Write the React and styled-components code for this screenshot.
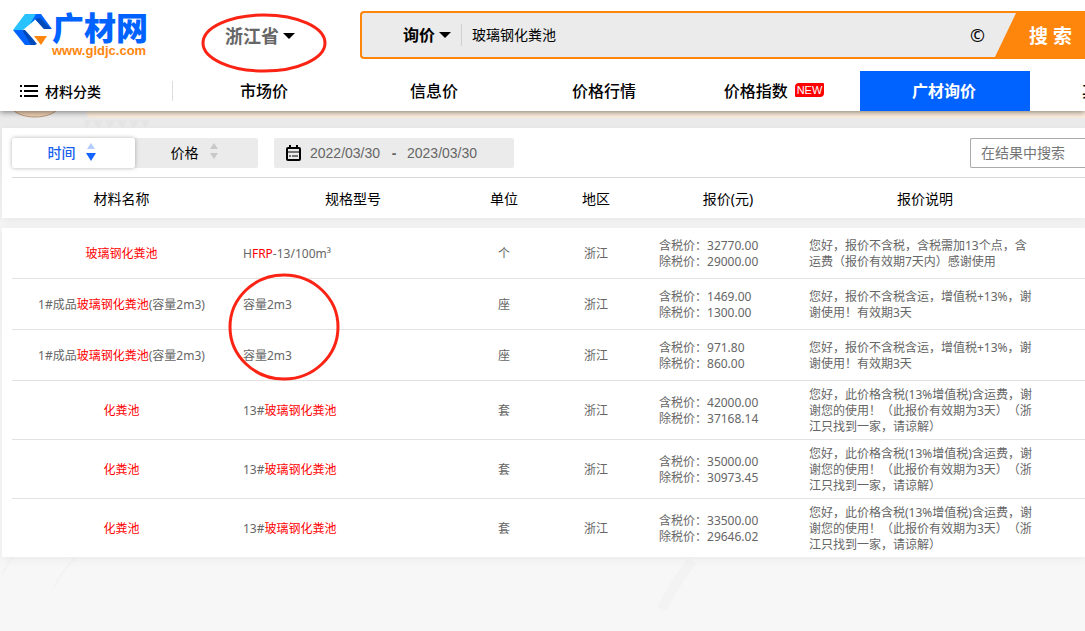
import React, {useState} from 'react';
import styled, {createGlobalStyle, css} from 'styled-components';

const GlobalStyle = createGlobalStyle`
    * {
        box-sizing: border-box;
    }

    body {
        margin: 0;
        overflow: hidden;
        min-height: 100vh;
        background: linear-gradient(#ebebeb 128px, #f5f5f5 228px, #f7f7f7 480px);
        color: #000;
        font-family: "Noto Sans", "Noto Sans CJK SC", sans-serif;
        font-size: 12px;
        text-spacing-trim: space-all;
    }

    button, input {
        margin: 0;
        padding: 0;
        border: 0;
        background: none;
        color: inherit;
        font-family: inherit;
    }
`;

const Header = styled.header`
    position: relative;
    background: #fff;
    box-shadow: 0 1px 6px rgba(0, 0, 0, 0.5);
`;

const TopRow = styled.div`
    display: flex;
    align-items: flex-start;
    height: 71px;
    padding: 11px 0 0 12px;
`;

const Logo = styled.a`
    display: flex;
    width: 213px;
    color: #0062ff;
    text-decoration: none;
`;

const LogoMark = styled.svg`
    flex: none;
    width: 40px;
    height: 36px;
`;

const LogoText = styled.span`
    display: flex;
    flex-direction: column;
    padding-top: 2px;
    white-space: nowrap;
`;

const LogoName = styled.strong`
    font-size: 32px;
    font-weight: 900;
    line-height: 30px;
`;

const LogoUrl = styled.span`
    color: #ff860d;
    font-family: "Liberation Sans", sans-serif;
    font-size: 13px;
    font-weight: bold;
    line-height: 16px;
`;

const Region = styled.div`
    position: relative;
    width: 135px;
    padding-top: 12px;
`;

const Picker = styled.button`
    display: flex;
    align-items: center;
    gap: 4px;
    color: ${props => props.$color || '#000'};
    font-size: ${props => props.$size || 16}px;
    font-weight: bold;
    line-height: 26px;
    white-space: nowrap;

    &::after {
        content: "";
        border: 6px solid transparent;
        border-top-color: #000;
        border-bottom: 0;
    }
`;

const Mark = styled.svg`
    position: absolute;
    top: ${props => props.$top}px;
    left: ${props => props.$left}px;
    pointer-events: none;
`;

const SearchForm = styled.form`
    display: flex;
    flex: 1;
    align-items: center;
    height: 48px;
    padding-left: 41px;
    border: 2px solid #ff860d;
    border-right: 0;
    border-radius: 4px 0 0 4px;
    background: #ebebeb;
`;

const SearchInput = styled.input`
    flex: 1;
    min-width: 0;
    height: 22px;
    margin-left: 10px;
    padding: 0 0 2px 10px;
    border-left: 1px solid #d0d0d0;
    font-size: 14px;
    outline: none;
`;

const ImageSearch = styled.button`
    font-family: "Noto Sans", sans-serif;
    font-size: 18px;
    line-height: 24px;
`;

const SearchButton = styled.button`
    width: 91px;
    height: 48px;
    margin-left: 9px;
    padding: 0 14px 0 35px;
    background: #ff860d;
    clip-path: polygon(23px 0, 100% 0, 100% 100%, 0 100%);
    color: #fff;
    font-size: 19px;
    font-weight: bold;
    text-align: left;
    white-space: nowrap;
`;

const Nav = styled.nav`
    display: flex;
    height: 40px;
    overflow: hidden;
`;

const Category = styled.button`
    display: flex;
    flex: none;
    align-items: center;
    gap: 7px;
    width: 173px;
    height: 20px;
    margin: 10px 7px 0 0;
    padding-left: 20px;
    border-right: 1px solid #ddd;
    font-size: 14px;
    font-weight: 500;
`;

const NavLink = styled.a`
    display: flex;
    flex: none;
    align-items: center;
    justify-content: center;
    gap: 7px;
    width: 170px;
    padding: 0 2px 2px 0;
    background: ${props => props.$active ? '#0062ff' : 'transparent'};
    color: ${props => props.$active ? '#fff' : '#000'};
    font-size: 16px;
    font-weight: ${props => props.$active ? 'bold' : 500};
    text-decoration: none;
`;

const Badge = styled.span`
    padding: 0 2px;
    border-radius: 4px 1px 4px 1px;
    background: #f00;
    color: #fff;
    font-family: "Liberation Sans", sans-serif;
    font-size: 11px;
    font-weight: normal;
    line-height: 14px;
`;

const Banner = styled.svg`
    display: block;
    width: 100%;
    height: 17px;
`;

const Main = styled.main`
    display: grid;
    gap: 10px;
    padding-left: 2px;
`;

const Card = styled.section`
    position: relative;
    padding-left: 10px;
    background: #fff;
    box-shadow: 0 2px 10px rgba(0, 0, 0, 0.06);
`;

const Toolbar = styled.div`
    display: flex;
    align-items: center;
    height: 50px;
    border-bottom: 1px solid #d8d8d8;
`;

const SortGroup = styled.div`
    display: flex;
    margin-right: 16px;
    border-radius: 2px;
    background: #ebebeb;
`;

const SortButton = styled.button`
    display: flex;
    align-items: center;
    justify-content: center;
    gap: 10px;
    width: 123px;
    height: 30px;
    padding: 0 4px 2px 0;
    border-radius: 2px;
    font-size: 14px;

    ${props => props.$active && css`
        background: #fff;
        box-shadow: 0 0 4px rgba(0, 0, 0, 0.3);
        color: #1a5fee;
        font-weight: 500;
    `}
`;

const DateRange = styled.div`
    display: flex;
    align-items: center;
    width: 240px;
    height: 30px;
    padding-left: 12px;
    border-radius: 2px;
    background: #ebebeb;
    color: #666;
    font-family: "Liberation Sans", sans-serif;
    font-size: 14px;
`;

const DateInput = styled.input`
    width: 71px;
    font-size: 14px;
    outline: none;
`;

const DateIcon = styled.svg`
    margin-right: 9px;
`;

const Dash = styled.span`
    width: 26px;
    font-weight: bold;
    text-align: center;
`;

const FilterInput = styled.input`
    width: 115px;
    height: 30px;
    margin-left: auto;
    padding-left: 10px;
    border: 1px solid #aaa;
    border-right: 0;
    border-radius: 2px 0 0 2px;
    font-size: 14px;

    &::placeholder {
        color: #757575;
    }
`;

const Table = styled.table`
    width: 100%;
    border-spacing: 0;
    table-layout: fixed;
`;

const HeadCell = styled.th`
    height: 40px;
    padding: 2px 0 0;
    font-size: 14px;
    font-weight: normal;
    line-height: 20px;
`;

const Cell = styled.td`
    height: 51px;
    padding: 6px 0 4px;
    border-bottom: 1px solid #e2e2e2;
    color: #666;
    line-height: 16px;
    text-align: center;

    tr:last-child > & {
        border-bottom: 0;
    }
`;

const SpecCell = styled(Cell)`
    padding-left: 12px;
    text-align: left;
`;

const PriceCell = styled(Cell)`
    text-align: left;
`;

const NoteCell = styled(Cell)`
    padding-right: 16px;
    padding-left: 12px;
    text-align: left;
`;

const Hit = styled.em`
    color: #f00;
    font-style: normal;
`;

const Streaks = styled.svg`
    display: block;
    width: 100%;
    height: 74px;
`;

const columns = [
    {title: '材料名称', width: 219},
    {title: '规格型号', width: 244},
    {title: '单位', width: 58},
    {title: '地区', width: 126},
    {title: '报价(元)', width: 138},
    {title: '报价说明', width: 256},
    {title: ''},
];

const tank = <Hit>玻璃钢化粪池</Hit>;
const longNote = '您好，此价格含税(13%增值税)含运费，谢谢您的使用！（此报价有效期为3天）（浙江只找到一家，请谅解）';
const shortNote = '您好，报价不含税含运，增值税+13%，谢谢使用！有效期3天';

const rows = [
    {name: tank, spec: <>H<Hit>FRP</Hit>-13/100m³</>, unit: '个', taxed: '32770.00', net: '29000.00',
        note: '您好，报价不含税，含税需加13个点，含运费（报价有效期7天内）感谢使用'},
    {name: <>1#成品{tank}(容量2m3)</>, spec: '容量2m3', unit: '座', taxed: '1469.00', net: '1300.00', note: shortNote},
    {name: <>1#成品{tank}(容量2m3)</>, spec: '容量2m3', unit: '座', taxed: '971.80', net: '860.00', note: shortNote},
    {name: <Hit>化粪池</Hit>, spec: <>13#{tank}</>, unit: '套', taxed: '42000.00', net: '37168.14', note: longNote},
    {name: <Hit>化粪池</Hit>, spec: <>13#{tank}</>, unit: '套', taxed: '35000.00', net: '30973.45', note: longNote},
    {name: <Hit>化粪池</Hit>, spec: <>13#{tank}</>, unit: '套', taxed: '33500.00', net: '29646.02', note: longNote},
];

const links = ['市场价', '信息价', '价格行情', '价格指数', '广材询价', '其他服务'];

const Columns = () => (
    <colgroup>
        {columns.map(col => <col key={col.title} width={col.width} />)}
    </colgroup>
);

const SortArrows = ({active}) => (
    <svg width="10" height="18" viewBox="0 0 10 18" aria-hidden="true">
        <path d="M5 0l4 6H1z" fill={active ? '#b3ccff' : '#c8c8c8'} />
        <path d={active ? 'M0 10h10l-5 8z' : 'M1 10h8l-4 6z'} fill={active ? '#1664ff' : '#c8c8c8'} />
    </svg>
);

const Circle = ({top, left, rx, ry}) => (
    <Mark $top={top} $left={left} width={rx * 2 + 4} height={ry * 2 + 4} aria-hidden="true">
        <ellipse cx={rx + 2} cy={ry + 2} rx={rx} ry={ry} fill="none" stroke="#fb2314" strokeWidth="3" />
    </Mark>
);

const App = () => {
    const [keyword, setKeyword] = useState('玻璃钢化粪池');
    const [sort, setSort] = useState('时间');
    const [start, setStart] = useState('2022/03/30');
    const [end, setEnd] = useState('2023/03/30');

    return (
        <>
            <GlobalStyle />
            <Header>
                <TopRow>
                    <Logo href="#">
                        <LogoMark viewBox="0 0 40 36" aria-hidden="true">
                            <path d="M13 3h13l-3 6-12 10H1z" fill="#28c3ff" />
                            <path d="M1 19h9l14 15H13z" fill="#0062ff" />
                            <path d="M10 19h3l8 9 4 5-3 1h-3z" fill="#0049b8" />
                            <path d="M24 3h5l11 15h-8l-9-10-5 5z" fill="#0062ff" />
                            <path d="M28 7l11 11h-7l-9-10z" fill="#0049b8" />
                            <path d="M22 25h13l-6 9z" fill="#ff860d" />
                        </LogoMark>
                        <LogoText>
                            <LogoName>广材网</LogoName>
                            <LogoUrl>www.gldjc.com</LogoUrl>
                        </LogoText>
                    </Logo>
                    <Region>
                        <Picker type="button" $size={18} $color="#666">浙江省</Picker>
                        <Circle top={2} left={-24} rx={61} ry={28} />
                    </Region>
                    <SearchForm role="search" onSubmit={e => e.preventDefault()}>
                        <Picker type="button">询价</Picker>
                        <SearchInput aria-label="关键词" value={keyword} onChange={e => setKeyword(e.target.value)} />
                        <ImageSearch type="button">©</ImageSearch>
                        <SearchButton type="submit">搜 索</SearchButton>
                    </SearchForm>
                </TopRow>
                <Nav>
                    <Category type="button">
                        <svg width="18" height="12" viewBox="0 0 18 12" aria-hidden="true">
                            <path d="M4 1h14M4 6h14M4 11h14M0 1h2M0 6h2M0 11h2" stroke="#000" strokeWidth="2" />
                        </svg>
                        材料分类
                    </Category>
                    {links.map(text => (
                        <NavLink key={text} href="#" $active={text === '广材询价'}>
                            {text}
                            {text === '价格指数' && <Badge>NEW</Badge>}
                        </NavLink>
                    ))}
                </Nav>
            </Header>

            <Banner aria-hidden="true">
                <ellipse cx="35" cy="-6" rx="24" ry="12" fill="#ecd0b4" stroke="#c09b78" />
                <rect x="87" y="-6" width="100%" height="13" rx="4" fill="#fdeddd" />
                <path d="M84 9h66l-4 8-6-8-6 8-6-8-6 8-6-8-6 8-6-8-6 8-6-8-6 8z" fill="#e6e6e6" />
            </Banner>

            <Main>
                <Card>
                    <Toolbar>
                        <SortGroup>
                            {['时间', '价格'].map(key => (
                                <SortButton key={key} type="button" $active={sort === key} onClick={() => setSort(key)}>
                                    {key}
                                    <SortArrows active={sort === key} />
                                </SortButton>
                            ))}
                        </SortGroup>
                        <DateRange>
                            <DateIcon width="15" height="16" viewBox="0 0 15 16" fill="none" stroke="#000" strokeWidth="2" aria-hidden="true">
                                <rect x="1" y="3" width="13" height="12" rx="1" />
                                <path d="M4 0v4M11 0v4" />
                                <path d="M1 7h13M3 11h2M6 11h6" strokeWidth="1" />
                            </DateIcon>
                            <DateInput aria-label="开始日期" value={start} onChange={e => setStart(e.target.value)} />
                            <Dash>-</Dash>
                            <DateInput aria-label="结束日期" value={end} onChange={e => setEnd(e.target.value)} />
                        </DateRange>
                        <FilterInput aria-label="在结果中搜索" placeholder="在结果中搜索" />
                    </Toolbar>
                    <Table>
                        <Columns />
                        <thead>
                            <tr>
                                {columns.map(col => <HeadCell key={col.title}>{col.title}</HeadCell>)}
                            </tr>
                        </thead>
                    </Table>
                </Card>

                <Card>
                    <Table>
                        <Columns />
                        <tbody>
                            {rows.map((row, i) => (
                                <tr key={i}>
                                    <Cell>{row.name}</Cell>
                                    <SpecCell>{row.spec}</SpecCell>
                                    <Cell>{row.unit}</Cell>
                                    <Cell>浙江</Cell>
                                    <PriceCell>含税价：{row.taxed}<br />除税价：{row.net}</PriceCell>
                                    <NoteCell>{row.note}</NoteCell>
                                    <Cell />
                                </tr>
                            ))}
                        </tbody>
                    </Table>
                    <Circle top={45} left={226} rx={54} ry={52} />
                </Card>
            </Main>

            <Streaks fill="none" stroke="#f3f3f3" aria-hidden="true">
                <path d="M76 0Q62 14 53 32M12 0L2 17" strokeWidth="2" />
                <path d="M692 4Q672 30 662 52" strokeWidth="10" />
            </Streaks>
        </>
    );
};

export default App;
